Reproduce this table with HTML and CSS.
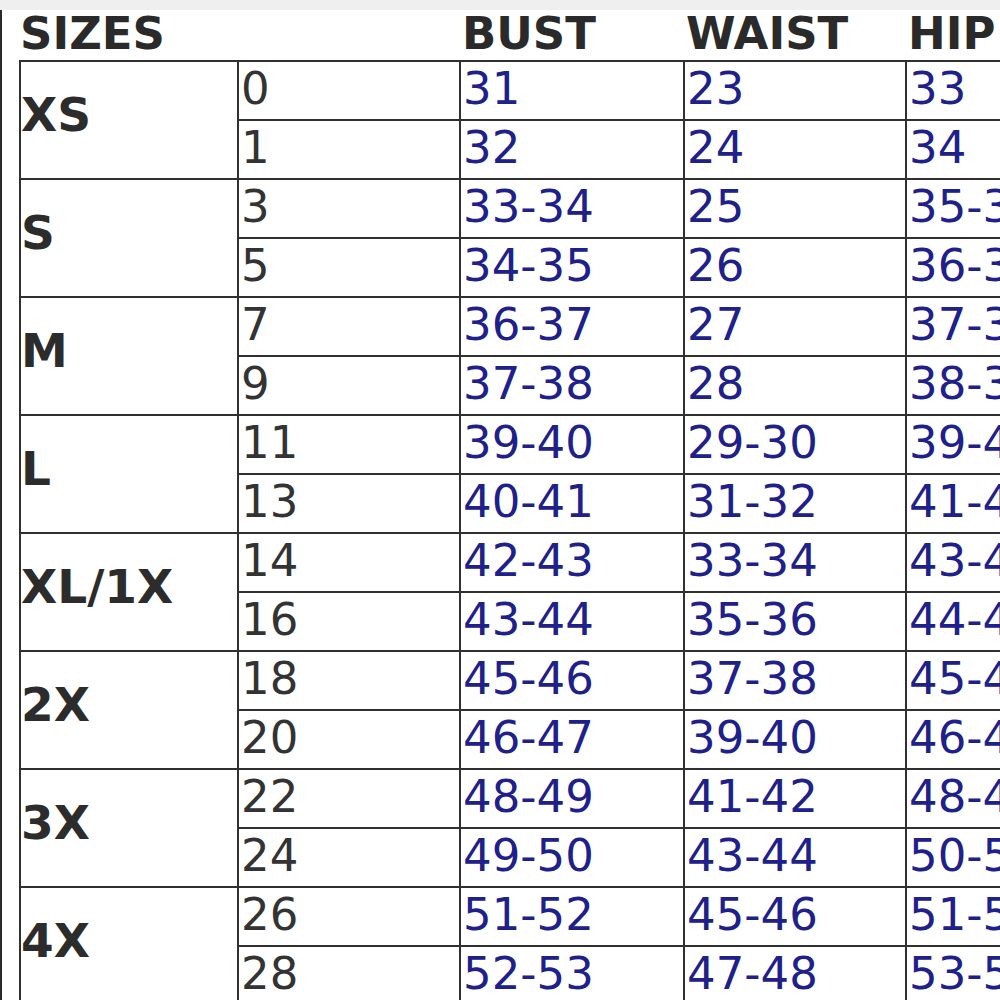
FILE: index.html
```html
<!DOCTYPE html>
<html>
<head>
<meta charset="utf-8">
<link rel="stylesheet" href="styles.css">
</head>
<body>
<div class="topbar"></div>
<div class="page">
  <div class="edge"></div>
  <div class="content">
    <table class="chart">
      <colgroup>
        <col class="c1"><col class="c2"><col class="c3"><col class="c4"><col class="c5">
      </colgroup>
      <thead>
        <tr class="head">
          <th>SIZES</th><th></th><th>BUST</th><th>WAIST</th><th>HIP</th>
        </tr>
      </thead>
      <tbody>
        <tr><td class="label" rowspan="2">XS</td><td class="size">0</td><td class="val">31</td><td class="val">23</td><td class="val">33</td></tr>
        <tr><td class="size">1</td><td class="val">32</td><td class="val">24</td><td class="val">34</td></tr>
        <tr><td class="label" rowspan="2">S</td><td class="size">3</td><td class="val">33-34</td><td class="val">25</td><td class="val">35-36</td></tr>
        <tr><td class="size">5</td><td class="val">34-35</td><td class="val">26</td><td class="val">36-37</td></tr>
        <tr><td class="label" rowspan="2">M</td><td class="size">7</td><td class="val">36-37</td><td class="val">27</td><td class="val">37-38</td></tr>
        <tr><td class="size">9</td><td class="val">37-38</td><td class="val">28</td><td class="val">38-39</td></tr>
        <tr><td class="label" rowspan="2">L</td><td class="size">11</td><td class="val">39-40</td><td class="val">29-30</td><td class="val">39-41</td></tr>
        <tr><td class="size">13</td><td class="val">40-41</td><td class="val">31-32</td><td class="val">41-43</td></tr>
        <tr><td class="label" rowspan="2">XL/1X</td><td class="size">14</td><td class="val">42-43</td><td class="val">33-34</td><td class="val">43-44</td></tr>
        <tr><td class="size">16</td><td class="val">43-44</td><td class="val">35-36</td><td class="val">44-45</td></tr>
        <tr><td class="label" rowspan="2">2X</td><td class="size">18</td><td class="val">45-46</td><td class="val">37-38</td><td class="val">45-46</td></tr>
        <tr><td class="size">20</td><td class="val">46-47</td><td class="val">39-40</td><td class="val">46-47</td></tr>
        <tr><td class="label" rowspan="2">3X</td><td class="size">22</td><td class="val">48-49</td><td class="val">41-42</td><td class="val">48-49</td></tr>
        <tr><td class="size">24</td><td class="val">49-50</td><td class="val">43-44</td><td class="val">50-51</td></tr>
        <tr><td class="label" rowspan="2">4X</td><td class="size">26</td><td class="val">51-52</td><td class="val">45-46</td><td class="val">51-52</td></tr>
        <tr><td class="size">28</td><td class="val">52-53</td><td class="val">47-48</td><td class="val">53-54</td></tr>
      </tbody>
    </table>
  </div>
</div>
</body>
</html>
```
FILE: styles.css
```css
html, body {
  margin: 0;
  padding: 0;
  background: #ffffff;
  overflow: hidden;
  width: 1000px;
  height: 1000px;
}

.topbar {
  height: 10px;
  background: #efefef;
}

.page {
  display: flex;
  min-height: 990px;
}

.edge {
  flex: 0 0 2px;
  background: #2a2a2a;
}

.content {
  flex: 1 1 auto;
  padding-left: 17px;
}

.chart {
  border-collapse: collapse;
  table-layout: fixed;
  width: 1108px;
  font-family: "DejaVu Sans", Verdana, sans-serif;
}

.c1 { width: 218px; }
.c2 { width: 222px; }
.c3 { width: 224px; }
.c4 { width: 222px; }
.c5 { width: 222px; }

.head th {
  height: 48px;
  padding: 0 0 2px 2px;
  text-align: left;
  vertical-align: top;
  font-size: 45px;
  line-height: 48px;
  font-weight: bold;
  color: #2a2a2a;
  border: none;
}

.head th:first-child {
  padding-left: 0;
}

tbody tr {
  height: 59px;
}

tbody td {
  border: 2px solid #303030;
  padding: 1px 0 0 2px;
  vertical-align: top;
  font-size: 45px;
  line-height: 52px;
  text-align: left;
  white-space: nowrap;
}

.label {
  vertical-align: middle;
  font-weight: bold;
  font-size: 47px;
  color: #2c2c2c;
  padding: 0 0 10px 0;
}

.size {
  color: #333333;
}

.val {
  color: #20208a;
}
```
